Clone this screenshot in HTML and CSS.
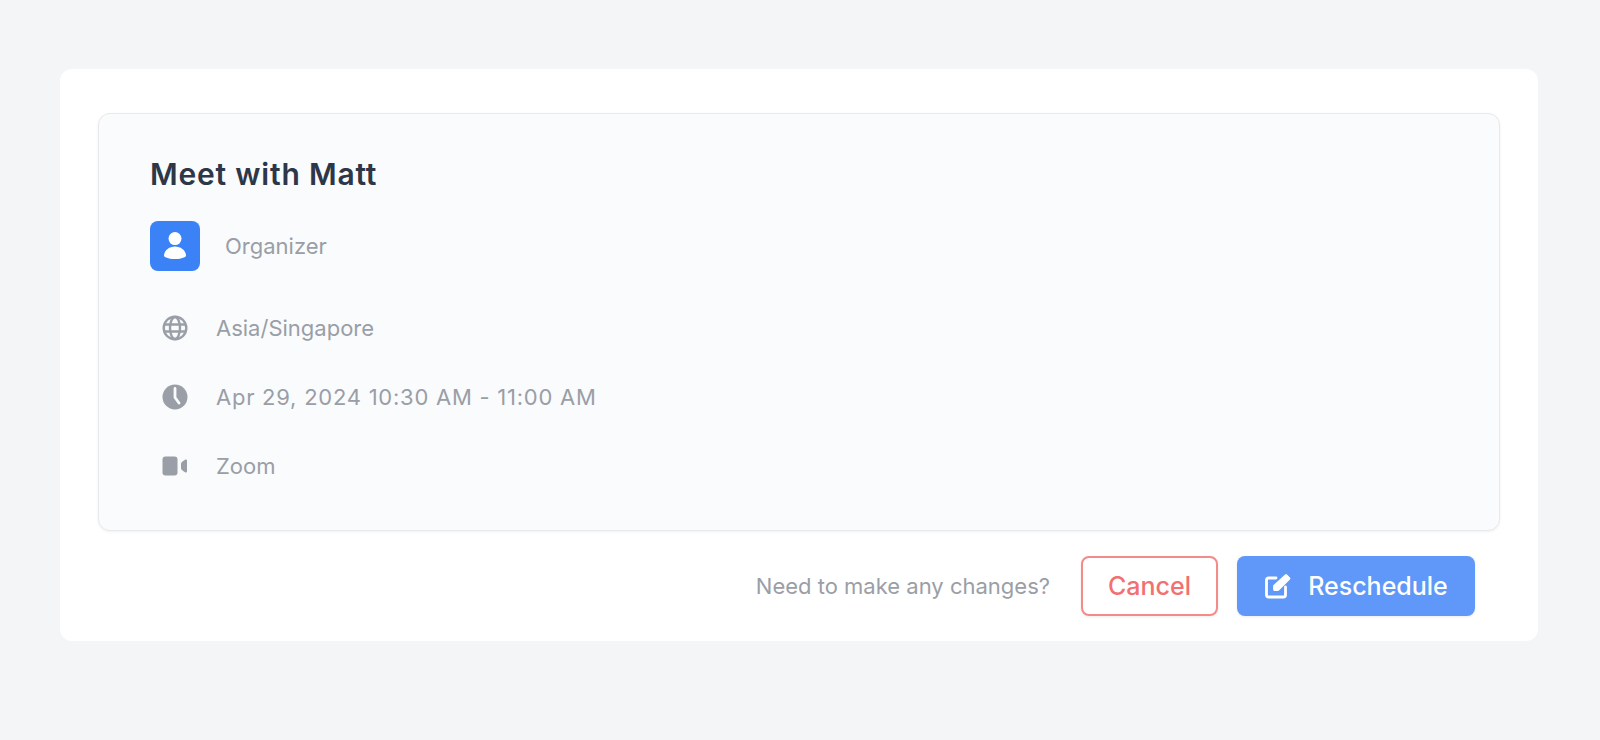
FILE: index.html
```html
<!DOCTYPE html>
<html lang="en">
<head>
<meta charset="utf-8">
<title>Meet with Matt</title>
<link rel="stylesheet" href="styles.css">
</head>
<body>
<main class="card">
  <section class="details">
    <h1 class="title">Meet with Matt</h1>
    <div class="organizer">
      <span class="avatar">
        <svg width="24" height="28" viewBox="0 0 24 28" fill="#fff"><circle cx="12" cy="6.600" r="6.500"/><path d="M12 14.500c-5.500 0-10.300 3.500-11 8.500-.1 1 .6 1.700 1.500 2.200 2.800 1.400 6 1.800 9.500 1.800s6.700-.4 9.500-1.800c.9-.5 1.600-1.200 1.500-2.200-.7-5-5.500-8.500-11-8.500z"/></svg>
      </span>
      <span class="organizer-name">Organizer</span>
    </div>
    <div class="row">
      <span class="row-icon">
        <svg width="26" height="26" viewBox="0 0 26 26" fill="none" stroke="#9a9ea6" stroke-width="2.400"><circle cx="13" cy="13" r="11.300"/><ellipse cx="13" cy="13" rx="5" ry="11"/><path d="M2.500 9.500h21M2.500 16.500h21"/></svg>
      </span>
      <span>Asia/Singapore</span>
    </div>
    <div class="row">
      <span class="row-icon">
        <svg width="26" height="26" viewBox="0 0 26 26"><circle cx="13" cy="13" r="12.500" fill="#9a9ea6"/><path d="M13 4.500v9l4 5.500" fill="none" stroke="#f9fbfd" stroke-width="2.800" stroke-linecap="round" stroke-linejoin="round"/></svg>
      </span>
      <span class="when">Apr 29, 2024 10:30 AM - 11:00 AM</span>
    </div>
    <div class="row">
      <span class="row-icon">
        <svg width="26" height="20" viewBox="0 0 26 20" fill="#9a9ea6"><rect x="0.500" y="0.500" width="15" height="19" rx="3"/><path d="M19 8c0-1 .5-1.800 1.500-2.500l2.500-1.800c1-.6 2-.1 2 1v10.600c0 1.100-1 1.600-2 1l-2.500-1.800c-1-.7-1.500-1.500-1.500-2.500z"/></svg>
      </span>
      <span>Zoom</span>
    </div>
  </section>
  <footer class="actions">
    <span class="hint">Need to make any changes?</span>
    <button class="btn btn-cancel" type="button">Cancel</button>
    <button class="btn btn-primary" type="button">
      <svg width="28" height="26" viewBox="0 0 28 26" fill="none" stroke="#fff" stroke-width="2.800" stroke-linecap="round" stroke-linejoin="round"><path d="M12 5H4.500A2 2 0 0 0 2.500 7v15a2 2 0 0 0 2 2h15a2 2 0 0 0 2-2v-8"/><path d="M10.500 16.500v-3.500L22 2.500l3 3L14 16.500z" fill="#fff"/></svg>
      <span>Reschedule</span>
    </button>
  </footer>
</main>
</body>
</html>
```
FILE: styles.css
```css
* { box-sizing: border-box; }
html, body { margin: 0; height: 740px; }
body {
  background: #f3f5f7;
  font-family: Inter, "Liberation Sans", sans-serif;
  padding: 69px 62px 0 60px;
  overflow: hidden;
}
.card {
  background: #fff;
  border-radius: 12px;
  height: 572px;
  padding: 44px 38px 0;
}
.details {
  height: 418px;
  background: #f9fbfd;
  border: 1px solid #e7e9ec;
  border-radius: 12px;
  padding: 42px 50px 0 51px;
  box-shadow: 0 1px 3px rgba(0,0,0,.06);
}
.title {
  margin: 0;
  font-size: 30px;
  line-height: 36px;
  font-weight: 600;
  letter-spacing: 0.8px;
  color: #2d3748;
}
.organizer {
  display: flex;
  align-items: center;
  margin-top: 29px;
  height: 50px;
}
.avatar {
  width: 50px;
  height: 50px;
  border-radius: 8px;
  background: #3b82f6;
  display: flex;
  align-items: center;
  justify-content: center;
}
.organizer-name {
  margin-left: 25px;
  font-size: 22px;
  color: #9a9ea6;
}
.row {
  display: flex;
  align-items: center;
  height: 30px;
  margin-top: 39px;
  font-size: 22px;
  color: #9a9ea6;
}
.organizer + .row { margin-top: 42px; }
.when {
  letter-spacing: 0.75px;
}
.row-icon {
  width: 50px;
  margin-right: 16px;
  display: flex;
  justify-content: center;
}
.actions {
  display: flex;
  align-items: center;
  justify-content: flex-end;
  margin-top: 25px;
  padding-right: 25px;
}
.hint {
  font-size: 22px;
  color: #9a9ea6;
  margin-right: 31px;
}
.btn {
  height: 60px;
  border-radius: 8px;
  font-family: inherit;
  font-size: 25px;
  font-weight: 500;
  display: flex;
  align-items: center;
  justify-content: center;
  box-shadow: 0 1px 3px rgba(0,0,0,.08);
}
.btn-cancel {
  width: 137px;
  background: #fff;
  border: 2px solid #f48a8a;
  color: #f27070;
}
.btn-primary {
  width: 238px;
  margin-left: 19px;
  background: #5f98f8;
  border: 0;
  color: #fff;
  gap: 16px;
}
```
